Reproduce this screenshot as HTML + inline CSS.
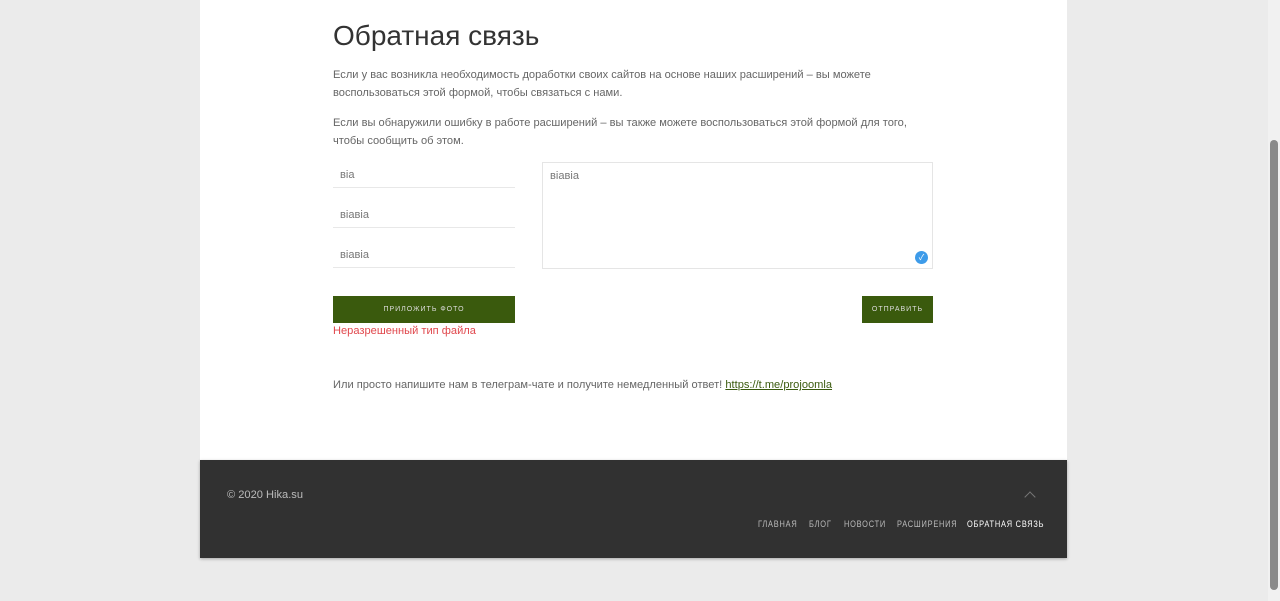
<!DOCTYPE html>
<html><head><meta charset="utf-8"><style>
*{box-sizing:border-box;margin:0;padding:0}
body{width:1280px;height:601px;background:#ebebeb;font-family:"Liberation Sans","Noto Sans CJK SC",sans-serif;position:relative;overflow:hidden}
.page{position:absolute;left:200px;top:0;width:867px;height:460px;background:#fff}
.foot{position:absolute;left:200px;top:460px;width:867px;height:98px;background:#313131;box-shadow:0 1px 3px rgba(0,0,0,.3)}
h1{position:absolute;left:133px;top:20px;font-size:28px;font-weight:normal;color:#333}
p{position:absolute;left:133px;width:590px;font-size:11.1px;line-height:17.5px;color:#666}
.in{position:absolute;left:133px;width:182px;height:26px;border-bottom:1px solid #e8e8e8;font-size:11.1px;color:#777;padding:7px 0 0 7px}
.ta{position:absolute;left:342px;top:162px;width:391px;height:107px;border:1px solid #e5e5e5;font-size:11.1px;color:#777;padding:7px}
.btn{position:absolute;top:296px;height:27px;background:#3a5a0d;color:#ddd;font-size:7px;letter-spacing:1px;text-align:center;line-height:27px}
.nav span{position:absolute;top:59px;font-size:9.5px;letter-spacing:1px;color:#bbb;white-space:nowrap;transform:scaleX(.78);transform-origin:left}
.sb{position:absolute;right:0;top:0;width:12px;height:601px;background:#f1f1f1}
.th{position:absolute;right:2px;top:140px;width:8px;height:450px;background:#8a8a8a;border-radius:4px}
</style></head><body>
<div class="page">
<h1>Обратная связь</h1>
<p style="top:67px">Если у вас возникла необходимость доработки своих сайтов на основе наших расширений – вы можете воспользоваться этой формой, чтобы связаться с нами.</p>
<p style="top:115px">Если вы обнаружили ошибку в работе расширений – вы также можете воспользоваться этой формой для того, чтобы сообщить об этом.</p>
<div class="in" style="top:162px">віа</div>
<div class="in" style="top:202px">віавіа</div>
<div class="in" style="top:242px">віавіа</div>
<div class="ta">віавіа<div style="position:absolute;right:4px;bottom:4px;width:13px;height:13px;border-radius:50%;background:#3d9be9;color:#fff;font-size:8px;line-height:13px;text-align:center">✓</div></div>
<div class="btn" style="left:133px;width:182px">ПРИЛОЖИТЬ ФОТО</div>
<div class="btn" style="left:662px;width:71px">ОТПРАВИТЬ</div>
<div style="position:absolute;left:133px;top:325px;font-size:11.1px;color:#e0474c">Неразрешенный тип файла</div>
<p style="top:377px;width:700px">Или просто напишите нам в телеграм-чате и получите немедленный ответ! <span style="color:#3a5a0d;text-decoration:underline">https://t.me/projoomla</span></p>
</div>
<div class="foot">
<div style="position:absolute;left:27px;top:29px;font-size:11.1px;color:#bbb">© 2020 Hika.su</div>
<div style="position:absolute;left:826px;top:33px;width:8px;height:8px;border-left:1px solid #777;border-top:1px solid #777;transform:rotate(45deg)"></div>
<div class="nav"><span style="left:558px">ГЛАВНАЯ</span><span style="left:609px">БЛОГ</span><span style="left:644px">НОВОСТИ</span><span style="left:697px">РАСШИРЕНИЯ</span><span style="left:767px;color:#fff">ОБРАТНАЯ СВЯЗЬ</span></div>
</div>
<div class="sb"><div class="th"></div></div>
</body></html>
